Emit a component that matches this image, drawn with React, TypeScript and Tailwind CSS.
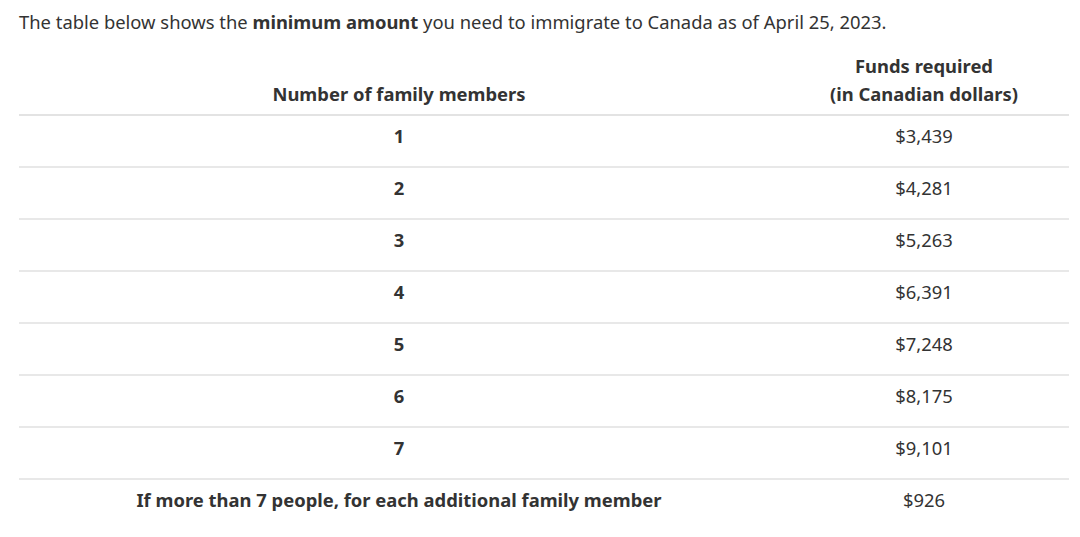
const rows: [string, string][] = [
  ['1', '$3,439'],
  ['2', '$4,281'],
  ['3', '$5,263'],
  ['4', '$6,391'],
  ['5', '$7,248'],
  ['6', '$8,175'],
  ['7', '$9,101'],
];

export default function App() {
  return (
    <div className="min-h-[537px] w-[1080px] bg-white px-[19px] pt-[8px] font-['Noto_Sans',sans-serif] text-[18.4px] leading-[28px] text-[#333]">
      <p>
        The table below shows the <strong className="font-bold">minimum amount</strong> you need to immigrate to Canada as of April 25, 2023.
      </p>

      <table className="mt-[16px] w-[1050px] border-collapse">
        <thead>
          <tr className="border-b-2 border-[#e3e3e3]">
            <th className="w-[760px] px-2 pb-[6px] align-bottom font-bold">Number of family members</th>
            <th className="px-2 pb-[6px] align-bottom font-bold">
              Funds required
              <br />
              (in Canadian dollars)
            </th>
          </tr>
        </thead>
        <tbody>
          {rows.map(([count, amount]) => (
            <tr key={count} className="border-b-2 border-[#e8e8e8]">
              <td className="h-[50.4px] px-2 pt-[6px] pb-4 text-center align-top font-bold">{count}</td>
              <td className="px-2 pt-[6px] pb-4 text-center align-top">{amount}</td>
            </tr>
          ))}
          <tr>
            <td className="px-2 pt-[6px] pb-4 text-center align-top font-bold">If more than 7 people, for each additional family member</td>
            <td className="px-2 pt-[6px] pb-4 text-center align-top">$926</td>
          </tr>
        </tbody>
      </table>
    </div>
  );
}
